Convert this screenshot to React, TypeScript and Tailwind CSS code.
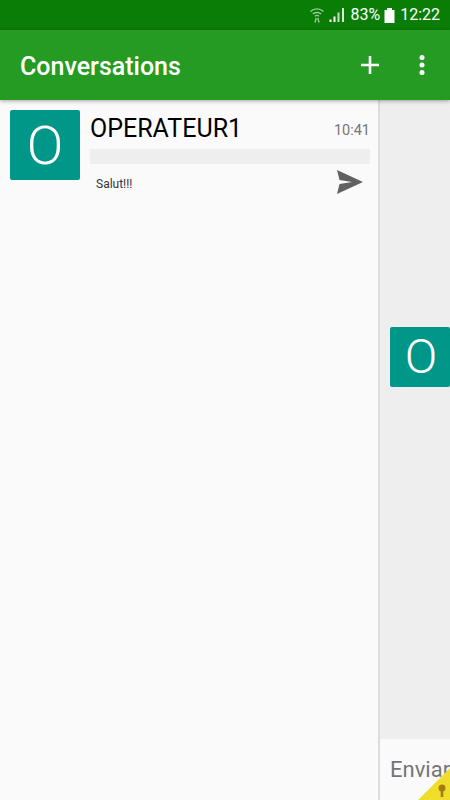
const roboto = "font-['Roboto',sans-serif]";

function StatusBar() {
  return (
    <div className="flex h-[30px] shrink-0 items-center justify-end bg-[#0a7d07] pr-[10px] text-white">
      <svg width="14" height="16" viewBox="0 0 14 16" className="mr-[5px] opacity-60" fill="none" stroke="#fff">
        <path d="M0.5 4.5C4 1 10 1 13.5 4.5" strokeWidth="1.4" />
        <path d="M2.8 7C5 5 9 5 11.2 7" strokeWidth="1.4" />
        <path d="M5 9.2C6.2 8.2 7.8 8.2 9 9.2" strokeWidth="1.4" />
        <path d="M5 15.5L6.2 11M9 15.5L7.8 11" strokeWidth="1.4" />
      </svg>
      <svg width="16" height="16" viewBox="0 0 16 16" className="mr-[5px]" fill="#fff">
        <rect x="0.5" y="12.5" width="2" height="2.5" />
        <rect x="4.5" y="9.5" width="2" height="5.5" />
        <rect x="8.5" y="5.5" width="2" height="9.5" opacity="0.75" />
        <rect x="13" y="1" width="2" height="14" opacity="0.85" />
      </svg>
      <span className={`${roboto} text-[16px] leading-none`}>83%</span>
      <svg width="11" height="15" viewBox="0 0 11 15" className="ml-[4px] mr-[5px]" fill="#fff">
        <rect x="3" y="0" width="5" height="2" />
        <rect x="0.5" y="2" width="10" height="13" />
      </svg>
      <span className={`${roboto} text-[16px] leading-none`}>12:22</span>
    </div>
  );
}

function AppBar() {
  return (
    <div className="relative z-10 flex h-[70px] shrink-0 items-center justify-between bg-[#259b24] pl-5 pr-[25px] shadow-[0_1px_4px_rgba(0,0,0,0.35)]">
      <h1 className={`${roboto} mt-[3px] text-[25px] font-medium text-white`}>Conversations</h1>
      <div className="flex items-center gap-[40px]">
        <svg width="18" height="18" viewBox="0 0 18 18" stroke="#fff" strokeWidth="2.6">
          <path d="M9 0V18M0 9H18" />
        </svg>
        <svg width="6" height="20" viewBox="0 0 6 20" fill="#fff">
          <circle cx="3" cy="2.5" r="2.5" />
          <circle cx="3" cy="10" r="2.5" />
          <circle cx="3" cy="17.5" r="2.5" />
        </svg>
      </div>
    </div>
  );
}

function Avatar({ className }: { className: string }) {
  return (
    <div className={`flex shrink-0 items-center justify-center rounded-[2px] bg-[#009688] text-white ${roboto} font-light ${className}`}>
      O
    </div>
  );
}

function ConversationRow() {
  return (
    <div className="flex pl-[10px] pr-2 pt-[10px]">
      <Avatar className="h-[70px] w-[70px] text-[54px]" />
      <div className="ml-[10px] min-w-0 flex-1">
        <div className="flex h-[39px] items-start justify-between">
          <span className={`${roboto} text-[25px] leading-[37px] text-black`}>OPERATEUR1</span>
          <span className={`${roboto} mt-[11px] text-[14.5px] leading-[20px] text-[#757575]`}>10:41</span>
        </div>
        <div className="h-[15px] rounded-[1px] bg-[#eeeeee]" />
        <div className="flex items-start justify-between pr-[7px]">
          <span className={`${roboto} ml-[6px] mt-[12px] text-[12px] leading-[16px] text-[#333]`}>Salut!!!</span>
          <svg width="26" height="24" viewBox="0 0 26 24" className="mt-[6px]" fill="#616161">
            <path d="M0 0L26 12L0 24L2.5 14L15 12L2.5 10Z" />
          </svg>
        </div>
      </div>
    </div>
  );
}

export default function App() {
  return (
    <div className="relative flex h-[800px] w-[450px] flex-col overflow-hidden bg-white">
      <StatusBar />
      <AppBar />
      <div className="flex min-h-0 flex-1">
        <div className="w-[378px] shrink-0 bg-[#fafafa]">
          <ConversationRow />
        </div>
        <div className="w-[2px] shrink-0 bg-[#dcdcdc]" />
        <div className="flex min-w-0 flex-1 flex-col overflow-hidden">
          <div className="min-h-0 flex-1 bg-[#eeeeee] pl-[10px] pt-[227px]">
            <Avatar className="h-[60px] w-[60px] pl-[2px] text-[48px]" />
          </div>
          <div className="flex h-[61px] shrink-0 items-center overflow-hidden bg-[#fafafa] pl-[10px]">
            <span className={`${roboto} text-[22px] leading-none text-[#757575]`}>Enviar</span>
          </div>
        </div>
      </div>
      <svg width="32" height="32" viewBox="0 0 32 32" className="absolute bottom-0 right-0">
        <path d="M32 0V32H0Z" fill="#efdf2c" />
        <circle cx="24" cy="20" r="3.5" fill="#a67a12" />
        <rect x="22.7" y="21" width="2.6" height="8" fill="#a67a12" />
      </svg>
    </div>
  );
}
